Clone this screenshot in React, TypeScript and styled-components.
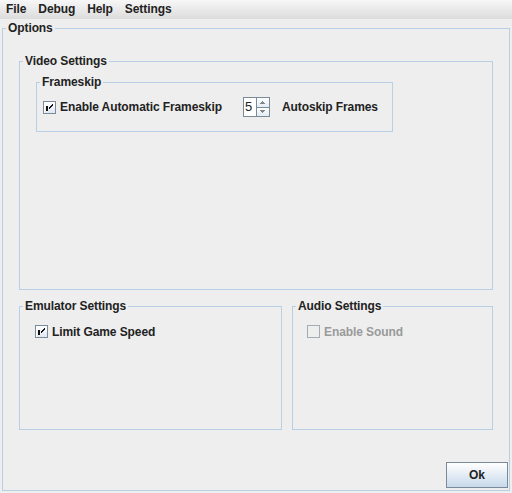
import React from "react";
import styled, { createGlobalStyle } from "styled-components";

const Global = createGlobalStyle`
  html, body { margin: 0; padding: 0; background: #eeeeee; }
  body {
    font-family: "Liberation Sans", Arial, sans-serif;
    font-size: 12px;
    font-weight: bold;
    letter-spacing: -0.09px;
    color: #222222;
  }
  #root { width: 512px; height: 493px; overflow: hidden; }
`;

const Window = styled.div`
  width: 512px;
  height: 493px;
  display: flex;
  flex-direction: column;
  background: #eeeeee;
`;

const MenuBar = styled.div`
  height: 19px;
  display: flex;
  align-items: center;
  background: linear-gradient(#f7f7f7, #dcdcdc);
`;

const MenuItem = styled.div`
  padding: 0 6px;
  line-height: 19px;
  color: #222222;
`;

const Group = styled.fieldset<{ $w?: number; $h?: number; $m?: string }>`
  margin: ${(p) => p.$m ?? "0"};
  padding: 0;
  min-width: 0;
  box-sizing: border-box;
  border: 1px solid #b8cfe5;
  ${(p) => (p.$w ? `width: ${p.$w}px;` : "")}
  ${(p) => (p.$h ? `height: ${p.$h}px;` : "")}
  display: flex;
  flex-direction: column;
`;

const Title = styled.legend`
  margin-left: 3px;
  padding: 0 2px;
  line-height: 13px;
  font-size: 12px;
  font-weight: bold;
  color: #222222;
`;

const Settings = styled.div`
  padding: 20px 16px 0 16px;
  display: flex;
  flex-direction: column;
  gap: 10px;
`;

const BottomRow = styled.div`
  display: flex;
  gap: 10px;
`;

const Row = styled.div<{ $pt: number; $pl: number }>`
  display: flex;
  align-items: center;
  padding: ${(p) => p.$pt}px 0 0 ${(p) => p.$pl}px;
`;

const CheckLabel = styled.label<{ $disabled?: boolean }>`
  display: flex;
  align-items: center;
  gap: 4px;
  height: 15px;
  color: ${(p) => (p.$disabled ? "#9a9a9a" : "#222222")};
`;

const Box = styled.span<{ $disabled?: boolean }>`
  width: 13px;
  height: 13px;
  box-sizing: border-box;
  border: 1px solid ${(p) => (p.$disabled ? "#a4abb3" : "#7a8a99")};
  background: ${(p) =>
    p.$disabled ? "transparent" : "linear-gradient(#ffffff, #dfe8f2)"};
  box-shadow: ${(p) => (p.$disabled ? "none" : "inset 1px 1px 0 #ffffff")};
  position: relative;
  flex: none;
`;

const CheckSvg = styled.svg`
  position: absolute;
  left: -1px;
  top: -1px;
`;

const Check: React.FC<{ checked?: boolean; disabled?: boolean; label: string }> = ({
  checked,
  disabled,
  label,
}) => (
  <CheckLabel $disabled={disabled}>
    <Box $disabled={disabled}>
      {checked && (
        <CheckSvg width="13" height="13" viewBox="0 0 13 13" shapeRendering="crispEdges">
          <rect x="3" y="5" width="2" height="5" fill="#111" />
          <line x1="9.5" y1="3.5" x2="5.5" y2="7.5" stroke="#111" strokeWidth="1" />
          <line x1="9.5" y1="4.5" x2="5.5" y2="8.5" stroke="#111" strokeWidth="1" />
        </CheckSvg>
      )}
    </Box>
    {label}
  </CheckLabel>
);

const Spinner = styled.div`
  display: flex;
  width: 27px;
  height: 20px;
  box-sizing: border-box;
  border: 1px solid #7a8a99;
  margin-left: 21px;
  margin-right: 12px;
`;

const SpinField = styled.div`
  width: 11px;
  background: #ffffff;
  font-weight: normal;
  font-size: 13px;
  line-height: 18px;
  padding-left: 1px;
  color: #222222;
`;

const SpinButtons = styled.div`
  flex: 1;
  display: flex;
  flex-direction: column;
  border-left: 1px solid #7a8a99;
`;

const SpinButton = styled.div<{ $top?: boolean }>`
  flex: 1;
  display: flex;
  align-items: center;
  justify-content: center;
  background: linear-gradient(#ffffff, #e3ebf3);
  ${(p) => (p.$top ? "border-bottom: 1px solid #7a8a99;" : "")}
`;

const Arrow = ({ up }: { up?: boolean }) => (
  <svg width="5" height="3" viewBox="0 0 5 3" shapeRendering="crispEdges">
    {up ? (
      <path d="M2 0h1v1h1v1h1v1H0V2h1V1h1z" fill="#555" opacity="0.7" />
    ) : (
      <path d="M0 0h5v1H4v1H3v1H2V2H1V1H0z" fill="#555" opacity="0.7" />
    )}
  </svg>
);

const Footer = styled.div`
  display: flex;
  justify-content: flex-end;
  margin-top: 32px;
  padding: 0 1px 2px 0;
`;

const OkButton = styled.button`
  width: 62px;
  height: 26px;
  box-sizing: border-box;
  border: 1px solid #7a8a99;
  background: linear-gradient(#ffffff 0%, #f2f6fa 25%, #dde8f3 60%, #c8d9ea 100%);
  font-family: "Liberation Sans", Arial, sans-serif;
  font-weight: bold;
  font-size: 12px;
  color: #222222;
  padding: 0;
`;

export default function App() {
  return (
    <Window>
      <Global />
      <MenuBar>
        <MenuItem>File</MenuItem>
        <MenuItem>Debug</MenuItem>
        <MenuItem>Help</MenuItem>
        <MenuItem>Settings</MenuItem>
      </MenuBar>
      <Group $m="3px 2px 0 2px">
        <Title>Options</Title>
        <Settings>
          <Group $h={235}>
            <Title>Video Settings</Title>
            <Group $w={357} $h={56} $m="8px 0 0 16px">
              <Title>Frameskip</Title>
              <Row $pt={8} $pl={6}>
                <Check checked label="Enable Automatic Frameskip" />
                <Spinner>
                  <SpinField>5</SpinField>
                  <SpinButtons>
                    <SpinButton $top>
                      <Arrow up />
                    </SpinButton>
                    <SpinButton>
                      <Arrow />
                    </SpinButton>
                  </SpinButtons>
                </Spinner>
                <span>Autoskip Frames</span>
              </Row>
            </Group>
          </Group>
          <BottomRow>
            <Group $w={263} $h={130}>
              <Title>Emulator Settings</Title>
              <Row $pt={11} $pl={15}>
                <Check checked label="Limit Game Speed" />
              </Row>
            </Group>
            <Group $w={201} $h={130}>
              <Title>Audio Settings</Title>
              <Row $pt={11} $pl={14}>
                <Check disabled label="Enable Sound" />
              </Row>
            </Group>
          </BottomRow>
        </Settings>
        <Footer>
          <OkButton>Ok</OkButton>
        </Footer>
      </Group>
    </Window>
  );
}
